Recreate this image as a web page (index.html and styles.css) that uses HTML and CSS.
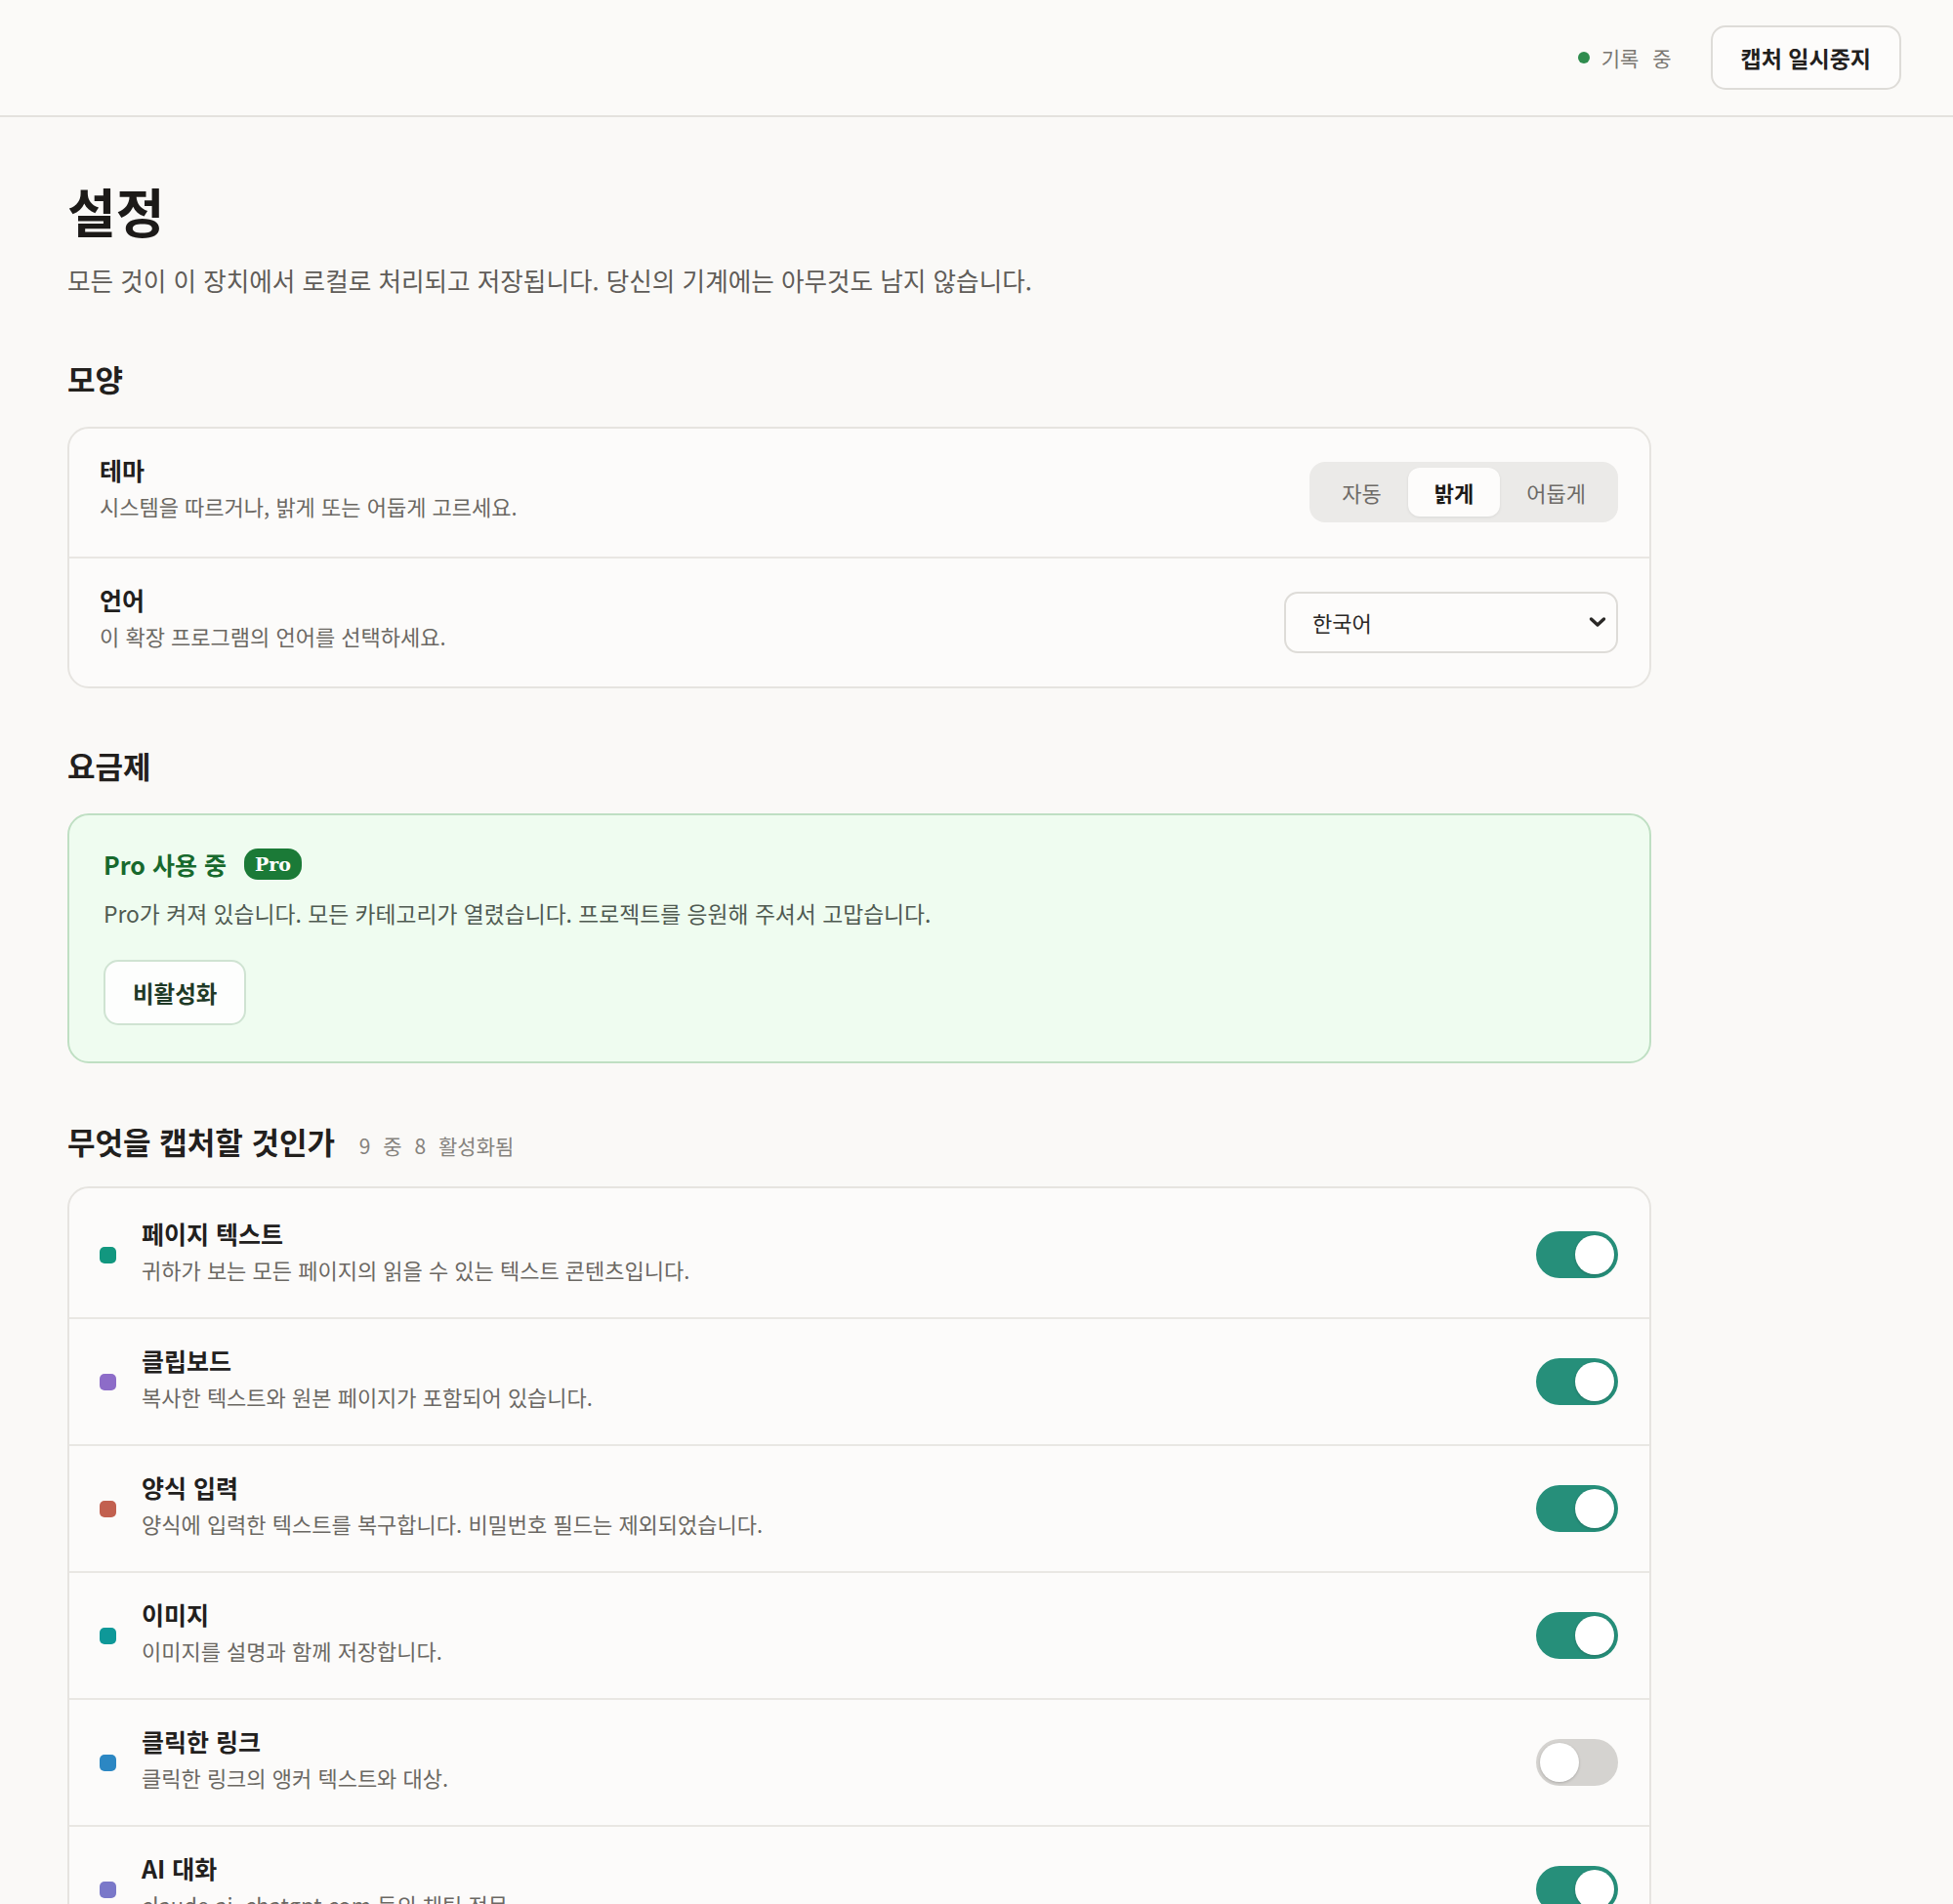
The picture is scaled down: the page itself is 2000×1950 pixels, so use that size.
FILE: index.html
```html
<!DOCTYPE html>
<html lang="ko">
<head>
  <meta charset="UTF-8" />
  <meta name="viewport" content="width=device-width, initial-scale=1.0" />
  <title>설정</title>
  <link rel="stylesheet" href="styles.css">
</head>
<body>
  <header class="topbar">
    <div class="status">
      <span class="status-dot"></span>
      <span class="status-text">기록 중</span>
    </div>
    <button class="btn">캡처 일시중지</button>
  </header>

  <main class="page">
    <h1>설정</h1>
    <p class="lead">모든 것이 이 장치에서 로컬로 처리되고 저장됩니다. 당신의 기계에는 아무것도 남지 않습니다.</p>

    <h2>모양</h2>
    <div class="card card-settings">
      <div class="row">
        <div class="row-text">
          <div class="row-title">테마</div>
          <div class="row-desc">시스템을 따르거나, 밝게 또는 어둡게 고르세요.</div>
        </div>
        <div class="segmented">
          <span class="seg">자동</span>
          <span class="seg active">밝게</span>
          <span class="seg">어둡게</span>
        </div>
      </div>
      <div class="row">
        <div class="row-text">
          <div class="row-title">언어</div>
          <div class="row-desc">이 확장 프로그램의 언어를 선택하세요.</div>
        </div>
        <div class="select">
          <span>한국어</span>
          <svg width="18" height="12" viewBox="0 0 18 12"><path d="M2.5 3 L9 9 L15.5 3" fill="none" stroke="#2a2826" stroke-width="3.4" stroke-linecap="round" stroke-linejoin="round"/></svg>
        </div>
      </div>
    </div>

    <h2>요금제</h2>
    <div class="pro-card">
      <div class="pro-title">Pro 사용 중 <span class="badge">Pro</span></div>
      <p class="pro-desc">Pro가 켜져 있습니다. 모든 카테고리가 열렸습니다. 프로젝트를 응원해 주셔서 고맙습니다.</p>
      <button class="btn btn-pro">비활성화</button>
    </div>

    <h2 class="h-capture">무엇을 캡처할 것인가 <span class="count">9 중 8 활성화됨</span></h2>
    <div class="card card-list">
      <div class="row">
        <span class="dot dot-page"></span>
        <div class="row-text">
          <div class="row-title">페이지 텍스트</div>
          <div class="row-desc">귀하가 보는 모든 페이지의 읽을 수 있는 텍스트 콘텐츠입니다.</div>
        </div>
        <span class="toggle on"><span class="knob"></span></span>
      </div>
      <div class="row">
        <span class="dot dot-clip"></span>
        <div class="row-text">
          <div class="row-title">클립보드</div>
          <div class="row-desc">복사한 텍스트와 원본 페이지가 포함되어 있습니다.</div>
        </div>
        <span class="toggle on"><span class="knob"></span></span>
      </div>
      <div class="row">
        <span class="dot dot-form"></span>
        <div class="row-text">
          <div class="row-title">양식 입력</div>
          <div class="row-desc">양식에 입력한 텍스트를 복구합니다. 비밀번호 필드는 제외되었습니다.</div>
        </div>
        <span class="toggle on"><span class="knob"></span></span>
      </div>
      <div class="row">
        <span class="dot dot-image"></span>
        <div class="row-text">
          <div class="row-title">이미지</div>
          <div class="row-desc">이미지를 설명과 함께 저장합니다.</div>
        </div>
        <span class="toggle on"><span class="knob"></span></span>
      </div>
      <div class="row">
        <span class="dot dot-link"></span>
        <div class="row-text">
          <div class="row-title">클릭한 링크</div>
          <div class="row-desc">클릭한 링크의 앵커 텍스트와 대상.</div>
        </div>
        <span class="toggle"><span class="knob"></span></span>
      </div>
      <div class="row">
        <span class="dot dot-ai"></span>
        <div class="row-text">
          <div class="row-title">AI 대화</div>
          <div class="row-desc">claude.ai, chatgpt.com 등의 채팅 전문.</div>
        </div>
        <span class="toggle on"><span class="knob"></span></span>
      </div>
    </div>
  </main>
</body>
</html>
```

FILE: styles.css
```css
body {
  margin: 0;
  font-family: "Noto Sans CJK KR", "Noto Sans", sans-serif;
  background: #faf9f7;
  color: #22201d;
}

.topbar {
  display: flex;
  justify-content: flex-end;
  align-items: center;
  gap: 40px;
  height: 118px;
  padding: 0 53px;
  border-bottom: 2px solid #e4e2de;
  background: #fbfaf8;
}

.status {
  display: flex;
  align-items: center;
  gap: 12px;
}

.status-dot {
  width: 12px;
  height: 12px;
  border-radius: 50%;
  background: #2f8c4e;
}

.status-text {
  font-size: 21px;
  color: #7a7772;
  word-spacing: 8px;
}

.btn {
  font-family: inherit;
  font-size: 23px;
  font-weight: 600;
  color: #22201d;
  background: #fdfcfb;
  border: 2px solid #dedcd8;
  border-radius: 15px;
  height: 66px;
  padding: 0 29px;
  cursor: pointer;
}

.page {
  width: 1622px;
  padding: 64px 69px 60px;
}

h1 {
  font-size: 54px;
  font-weight: 700;
  line-height: 64px;
  margin: 0 0 22px;
  color: #1c1a18;
}

.lead {
  font-size: 25.6px;
  line-height: 34px;
  color: #5f5c58;
  margin: 0 0 66px;
}

h2 {
  font-size: 31px;
  font-weight: 600;
  line-height: 36px;
  margin: 0 0 31px;
  color: #22201d;
}

h2.h-capture {
  margin-bottom: 28px;
}

.count {
  font-size: 21px;
  font-weight: 400;
  line-height: 1;
  color: #85827d;
  margin-left: 16px;
  word-spacing: 7px;
}

.card {
  background: #fcfbfa;
  border: 2px solid #e6e4e0;
  border-radius: 22px;
  margin-bottom: 61px;
  overflow: hidden;
}

.row {
  display: flex;
  align-items: center;
  padding: 26px 32px 26px 31px;
  border-top: 2px solid #e9e7e3;
}

.row:first-child {
  border-top: none;
}

.card-settings .row {
  padding-top: 26px;
  padding-bottom: 27px;
}

.card-settings .row-text {
  padding-bottom: 10px;
}

.card-list .row:first-child {
  padding-top: 30px;
}

.row-text {
  flex: 1;
  padding-bottom: 8px;
}

.row-title {
  font-size: 25px;
  font-weight: 600;
  line-height: 32px;
  color: #22201d;
}

.row-desc {
  font-size: 22px;
  line-height: 30px;
  margin-top: 6px;
  color: #6b6863;
}

.segmented {
  display: flex;
  align-items: center;
  background: #ebeae8;
  border-radius: 16px;
  padding: 6px;
  height: 62px;
  box-sizing: border-box;
}

.seg {
  font-size: 22px;
  color: #6e6b67;
  padding: 0 27px;
  line-height: 50px;
  border-radius: 12px;
}

.seg.active {
  background: #fdfcfb;
  color: #1c1a18;
  font-weight: 600;
  box-shadow: 0 1px 3px rgba(0, 0, 0, 0.08);
}

.select {
  display: flex;
  align-items: center;
  justify-content: space-between;
  width: 342px;
  height: 63px;
  box-sizing: border-box;
  padding: 0 10px 0 27px;
  border: 2px solid #dedcd8;
  border-radius: 14px;
  background: #fdfcfb;
  font-size: 22px;
  color: #2a2826;
}

.pro-card {
  background: #effcf0;
  border: 2px solid #bfdfc3;
  border-radius: 22px;
  padding: 34px 35px 37px;
  margin-bottom: 62px;
}

.pro-title {
  display: flex;
  align-items: center;
  gap: 18px;
  font-size: 25px;
  font-weight: 700;
  line-height: 32px;
  color: #17692d;
}

.badge {
  font-family: "DejaVu Serif", "Liberation Serif", serif;
  font-size: 19px;
  font-weight: 700;
  color: #fff;
  background: #1b7a37;
  border-radius: 14px;
  padding: 0 11px;
  line-height: 32px;
}

.pro-desc {
  font-size: 22.8px;
  line-height: 32px;
  color: #4f5a51;
  margin: 19px 0 31px;
}

.btn-pro {
  height: 67px;
  padding: 0 28px;
  font-size: 23.5px;
  color: #1f3a27;
  background: #fdfefd;
  border-color: #cfe3d2;
}

.dot {
  width: 17px;
  height: 17px;
  border-radius: 5px;
  margin-right: 26px;
  flex-shrink: 0;
}

.dot-page { background: #12977f; }
.dot-clip { background: #8d6cc8; }
.dot-form { background: #c2604f; }
.dot-image { background: #0e9898; }
.dot-link { background: #2c87c3; }
.dot-ai { background: #7a78c9; }

.toggle {
  display: flex;
  align-items: center;
  width: 84px;
  height: 48px;
  box-sizing: border-box;
  padding: 4px;
  border-radius: 24px;
  background: #d5d3d0;
}

.toggle.on {
  background: #268f7a;
  justify-content: flex-end;
}

.knob {
  width: 40px;
  height: 40px;
  border-radius: 50%;
  background: #fff;
  box-shadow: 0 1px 3px rgba(0, 0, 0, 0.2);
}
```
